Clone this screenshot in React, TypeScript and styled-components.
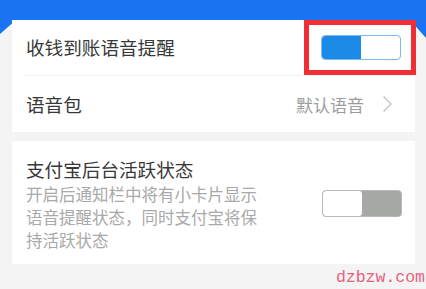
import styled, { createGlobalStyle } from 'styled-components'

const GlobalStyle = createGlobalStyle`
  html, body {
    margin: 0;
    padding: 0;
    background: #f4f4f4;
  }
  * {
    box-sizing: border-box;
  }
`

const Page = styled.div`
  position: relative;
  width: 426px;
  height: 289px;
  overflow: hidden;
  background: #f4f4f4;
  font-family: "Noto Sans CJK SC", "Noto Sans", sans-serif;
`

const Header = styled.div`
  height: 38px;
  background: #1a73f2;
  clip-path: polygon(0 0, 100% 0, 100% 38px, 410px 20px, 16px 20px, 0 34px);
`

const Card = styled.div<{ $first?: boolean }>`
  position: relative;
  z-index: 1;
  margin: ${p => (p.$first ? '-18px 11px 0 12px' : '9px 11px 0 12px')};
  background: #ffffff;
`

const Row = styled.div<{ $height: number }>`
  position: relative;
  display: flex;
  align-items: center;
  justify-content: space-between;
  height: ${p => p.$height}px;
  padding: 0 14px;
`

const Divider = styled.div`
  height: 1px;
  margin-left: 12px;
  background: #f1f1f1;
`

const Label = styled.span`
  font-size: 18.6px;
  color: #383838;
  letter-spacing: 0;
  line-height: 1;
`

const Value = styled.span`
  display: flex;
  align-items: center;
  gap: 18px;
  margin-right: 8px;
  font-size: 17px;
  color: #9c9c9c;
`

const Switch = styled.div<{ $on: boolean }>`
  display: flex;
  width: 80px;
  height: ${p => (p.$on ? 25 : 27)}px;
  border-radius: 4px;
  overflow: hidden;
  border: 1px solid ${p => (p.$on ? '#7fb8ee' : '#b9b9b9')};
  background: ${p => (p.$on ? '#ffffff' : '#a6a8a5')};
`

const SwitchHalf = styled.div<{ $on: boolean }>`
  width: 50%;
  height: 100%;
  background: ${p => (p.$on ? '#1a8ae6' : '#ffffff')};
  border-radius: ${p => (p.$on ? '3px 0 0 3px' : '3px')};
`

const Highlight = styled.div`
  position: absolute;
  top: 0;
  right: -1px;
  width: 112px;
  height: 55px;
  border: 5px solid #ef2f34;
  pointer-events: none;
`

const StatusBody = styled.div`
  display: flex;
  align-items: center;
  justify-content: space-between;
  padding: 14px 13px 12px 14px;
`

const StatusText = styled.div`
  display: flex;
  flex-direction: column;
`

const Title = styled.div`
  font-size: 18.6px;
  line-height: 28px;
  color: #383838;
`

const Desc = styled.div`
  width: 238px;
  font-size: 16.5px;
  line-height: 23px;
  color: #a9a9a9;
`

const Watermark = styled.div`
  position: absolute;
  right: 1px;
  bottom: 2px;
  font-family: "Liberation Mono", monospace;
  font-size: 16.5px;
  color: #e5627e;
  letter-spacing: 0;
`

function Chevron() {
  return (
    <svg width="11" height="18" viewBox="0 0 11 18" fill="none">
      <path d="M1.5 1.5 L9 9 L1.5 16.5" stroke="#c4c4c4" strokeWidth="1.4" />
    </svg>
  )
}

export default function App() {
  return (
    <>
      <GlobalStyle />
      <Page>
        <Header />
        <Card $first>
          <Row $height={55}>
            <Label>收钱到账语音提醒</Label>
            <Switch $on>
              <SwitchHalf $on />
            </Switch>
            <Highlight />
          </Row>
          <Divider />
          <Row $height={56}>
            <Label>语音包</Label>
            <Value>
              默认语音
              <Chevron />
            </Value>
          </Row>
        </Card>
        <Card>
          <StatusBody>
            <StatusText>
              <Title>支付宝后台活跃状态</Title>
              <Desc>开启后通知栏中将有小卡片显示语音提醒状态，同时支付宝将保持活跃状态</Desc>
            </StatusText>
            <Switch $on={false}>
              <SwitchHalf $on={false} />
            </Switch>
          </StatusBody>
        </Card>
        <Watermark>dzbzw.com</Watermark>
      </Page>
    </>
  )
}
